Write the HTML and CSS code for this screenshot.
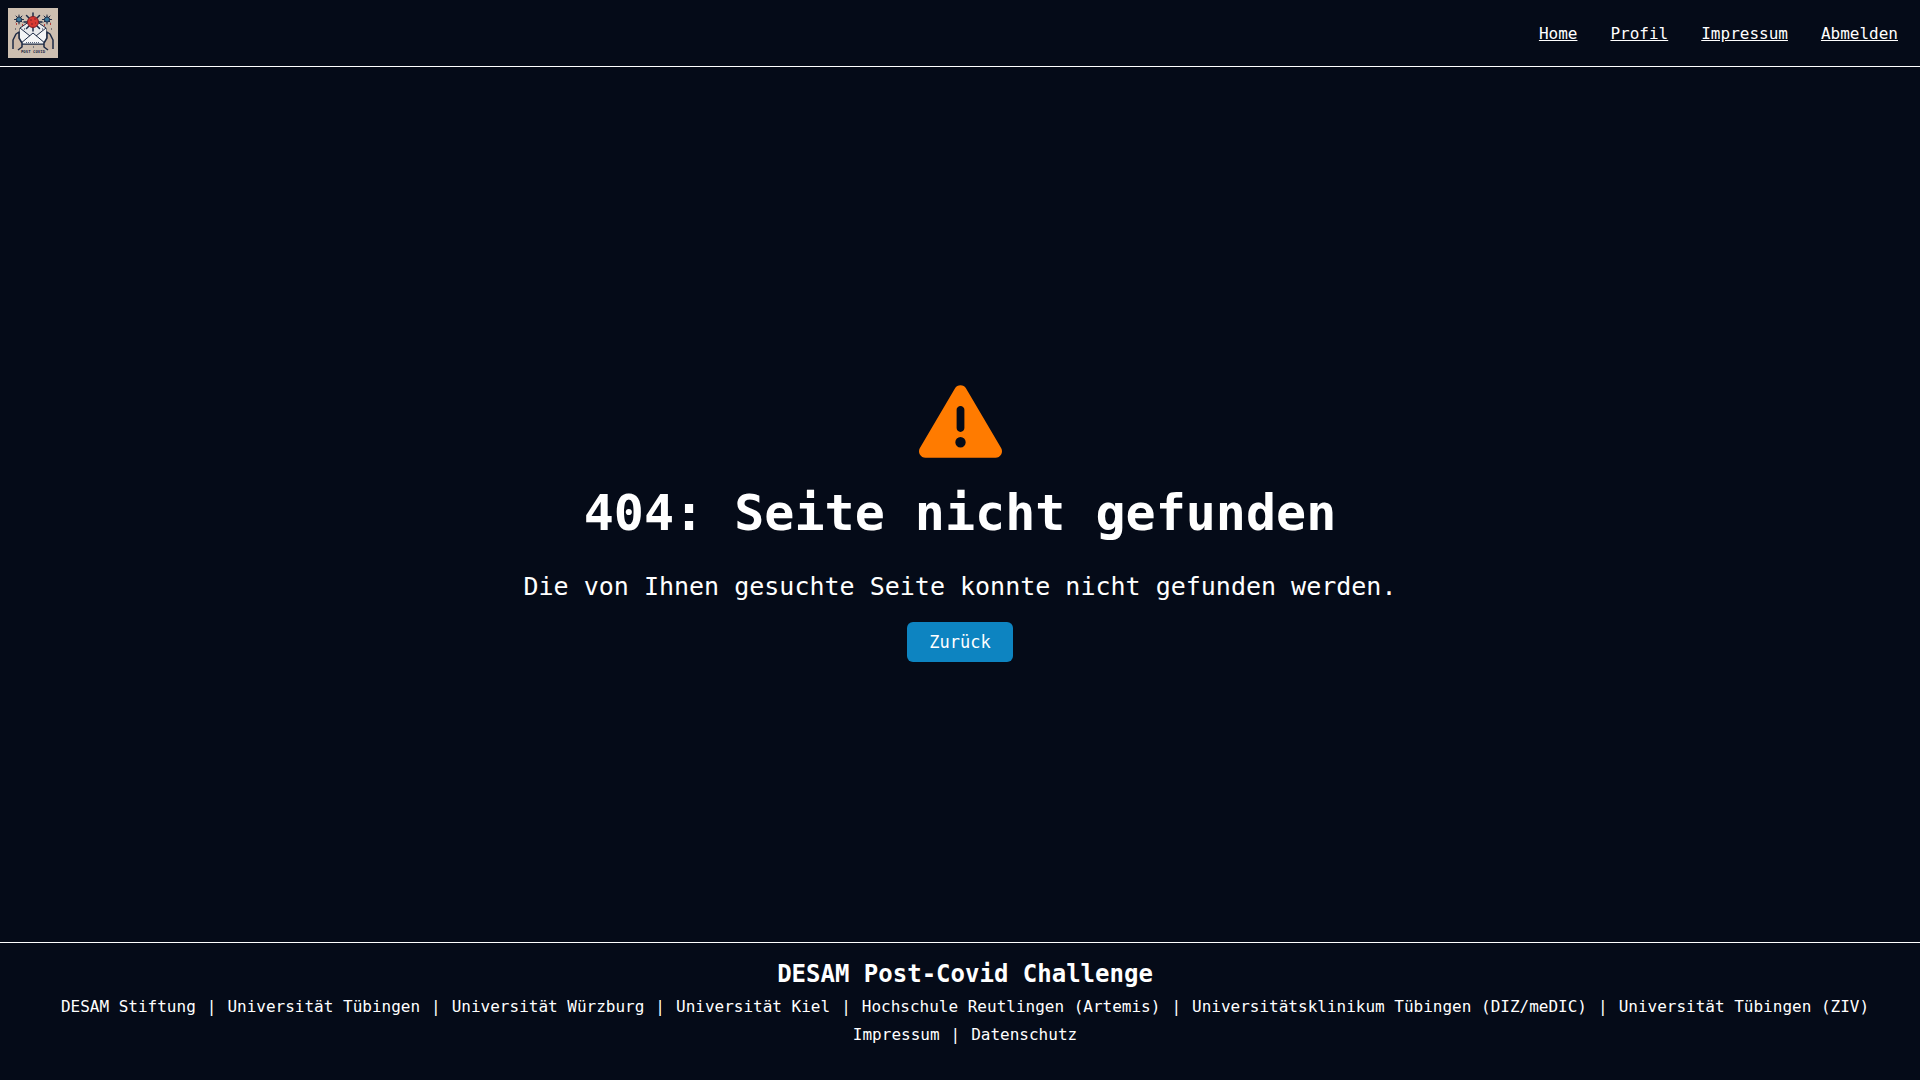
FILE: index.html
```
<!DOCTYPE html>
<html lang="de">
<head>
<meta charset="utf-8">
<meta name="viewport" content="width=device-width, initial-scale=1">
<title>404: Seite nicht gefunden</title>
<link rel="stylesheet" href="styles.css">
</head>
<body>
<header class="topbar">
  <a class="logo" href="#" aria-label="Post Covid Startseite">
    <svg viewBox="0 0 50 50" width="50" height="50" aria-hidden="true">
      <rect width="50" height="50" fill="#cdbfb1"/>
      <g fill="none" stroke="#1d2a44" stroke-width="1" stroke-linecap="round">
        <path d="M11 7v9M6.500 11.500h9M8 8l6 6M14 8l-6 6M39 7v9M34.500 11.500h9M36 8l6 6M42 8l-6 6"/>
      </g>
      <circle cx="11" cy="11.500" r="2.600" fill="#39779a" stroke="#1d2a44"/>
      <circle cx="39" cy="11.500" r="2.600" fill="#39779a" stroke="#1d2a44"/>
      <path d="M12 20l13-9 13 9v16H12z" fill="#e9eaec" stroke="#1d2a44"/>
      <path d="M25 5v18M16 14h18M18.500 7.500l13 13M31.500 7.500l-13 13" stroke="#1d2a44" stroke-width="1.500" stroke-linecap="round"/>
      <circle cx="25" cy="14" r="5.500" fill="#d93a32" stroke="#7c2028"/>
      <path d="M22 12h2M26 11h2M23 16h2M27 15h1" stroke="#7c2028"/>
      <path d="M12 20l10 8h6l10-8v16H12z" fill="#f4f5f6"/>
      <path d="M12 20l10 8M38 20l-10 8M12 36l13-11 13 11z" fill="#f4f5f6" stroke="#1d2a44"/>
      <path d="M18 34.500h14" stroke="#59647a" stroke-dasharray="1 1"/>
      <path d="M5 41v-9l3-6 3-2v6l3 5v4l-4 3M45 41v-9l-3-6-3-2v6l-3 5v4l4 3" fill="#cdb9a8" stroke="#1d2a44" stroke-width="1.500" stroke-linejoin="round"/>
      <path d="M8 16h1M14 17h1M42 16h1M36 17h1" stroke="#b4403b" stroke-width="2"/>
      <path d="M7 21h1M16 21h1M43 21h1M34 21h1M25 39h1" stroke="#1d2a44"/>
      <text class="logo-text" x="25" y="45" text-anchor="middle">POST COVID</text>
    </svg>
  </a>
  <nav class="nav" aria-label="Hauptnavigation">
    <a href="#">Home</a>
    <a href="#">Profil</a>
    <a href="#">Impressum</a>
    <a href="#">Abmelden</a>
  </nav>
</header>
<main class="error">
  <svg class="error-icon" viewBox="0 0 512 512" aria-hidden="true">
    <path fill="currentColor" d="M256 32c14.2 0 27.3 7.5 34.5 19.8l216 368c7.3 12.4 7.3 27.7 .2 40.1S486.3 480 472 480H40c-14.3 0-27.6-7.7-34.7-20.1s-7-27.8 .2-40.1l216-368C228.7 39.500 241.800 32 256 32zm0 128c-13.300 0-24 10.700-24 24V296c0 13.300 10.700 24 24 24s24-10.700 24-24V184c0-13.300-10.700-24-24-24zm32 224a32 32 0 1 0 -64 0 32 32 0 1 0 64 0z"/>
  </svg>
  <h1>404: Seite nicht gefunden</h1>
  <p>Die von Ihnen gesuchte Seite konnte nicht gefunden werden.</p>
  <button class="back" type="button">Zurück</button>
</main>
<footer class="footer">
  <h2>DESAM Post-Covid Challenge</h2>
  <div class="links">
    <a href="#">DESAM Stiftung</a><span>|</span>
    <a href="#">Universität Tübingen</a><span>|</span>
    <a href="#">Universität Würzburg</a><span>|</span>
    <a href="#">Universität Kiel</a><span>|</span>
    <a href="#">Hochschule Reutlingen (Artemis)</a><span>|</span>
    <a href="#">Universitätsklinikum Tübingen (DIZ/meDIC)</a><span>|</span>
    <a href="#">Universität Tübingen (ZIV)</a>
  </div>
  <div class="links">
    <a href="#">Impressum</a><span>|</span>
    <a href="#">Datenschutz</a>
  </div>
</footer>
</body>
</html>
```
FILE: styles.css
```
* {
  box-sizing: border-box;
}

body {
  margin: 0;
  min-height: 100vh;
  display: flex;
  flex-direction: column;
  background: #050b18;
  color: #fff;
  font-family: "DejaVu Sans Mono", monospace;
  font-size: 16px;
}

a {
  color: inherit;
}

.topbar {
  display: flex;
  align-items: center;
  justify-content: space-between;
  padding: 8px 22px 8px 8px;
  border-bottom: 1px solid #fff;
}

.logo,
.logo svg {
  display: block;
}

.logo-text {
  font-size: 4px;
  font-weight: bold;
  fill: #1d2a44;
}

.nav {
  display: flex;
  flex-wrap: wrap;
  gap: 33px;
}

.error {
  flex: 1;
  display: flex;
  flex-direction: column;
  align-items: center;
  justify-content: center;
  padding-top: 32px;
  text-align: center;
}

.error-icon {
  width: 83px;
  height: 83px;
  color: #ff7b00;
}

.error h1 {
  margin: 20px 0 29px;
  font-size: 50px;
  line-height: 60px;
}

.error p {
  margin: 0 0 20px;
  font-size: 25px;
  line-height: 30px;
}

.back {
  padding: 0 22px;
  border: 0;
  border-radius: 6px;
  background: #0d84c1;
  color: #fff;
  font-family: inherit;
  font-size: 17px;
  line-height: 40px;
}

.footer {
  padding: 15px 0 31px 10px;
  border-top: 1px solid #fff;
  text-align: center;
}

.footer h2 {
  margin: 0 0 3px;
  font-size: 24px;
  line-height: 32px;
}

.links {
  display: flex;
  flex-wrap: wrap;
  justify-content: center;
  gap: 0 11px;
  line-height: 28px;
}

.links a {
  text-decoration: none;
}
```
